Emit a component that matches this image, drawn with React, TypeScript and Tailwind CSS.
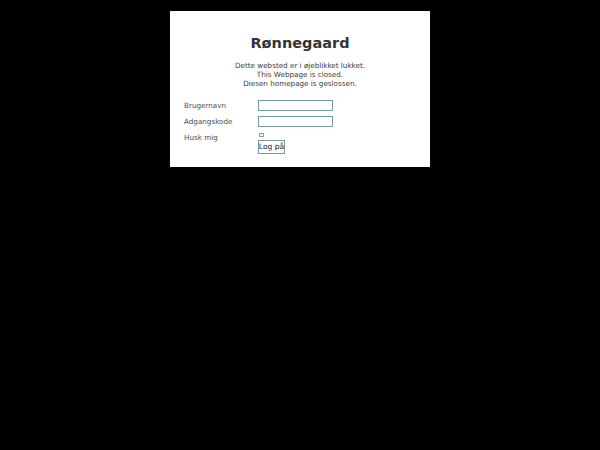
export default function App() {
  return (
    <div className="w-[600px] h-[450px] bg-black flex justify-center pt-[11px] font-['DejaVu_Sans',sans-serif]">
      <div className="w-[260px] h-[156px] bg-white pt-[24px]">
        <h1 className="text-[14.5px] leading-[17px] font-bold text-[#333] text-center">Rønnegaard</h1>
        <p className="mt-[9px] text-[7.2px] leading-[9px] text-center text-[#3a3a3a]">
          Dette websted er i øjeblikket lukket.
          <br />
          This Webpage is closed.
          <br />
          Diesen homepage is geslossen.
        </p>
        <form className="mt-[9px] pl-[14px] grid grid-cols-[74px_auto] text-[7.2px] text-[#4d4d4d]">
          <div className="h-[16px] flex items-center pt-[2px]">Brugernavn</div>
          <div className="h-[16px] flex items-center">
            <input type="text" className="w-[75px] h-[11px] border border-[#7a9aa0] bg-white outline-none" />
          </div>
          <div className="h-[16px] flex items-center pt-[2px]">Adgangskode</div>
          <div className="h-[16px] flex items-center">
            <input type="password" className="w-[75px] h-[11px] border border-[#7a9aa0] bg-white outline-none" />
          </div>
          <div className="h-[16px] flex items-center pt-[2px]">Husk mig</div>
          <div className="flex flex-col items-start">
            <div className="mt-[4px] ml-[1px] w-[5px] h-[4px] border border-[#999] bg-[#f4f4f4]" />
            <button
              type="button"
              className="mt-[3px] w-[27px] h-[14px] border border-[#7a9aa0] bg-white text-[7.6px] leading-[12px] text-[#222] whitespace-nowrap flex items-center justify-center"
            >
              Log på
            </button>
          </div>
        </form>
      </div>
    </div>
  );
}
